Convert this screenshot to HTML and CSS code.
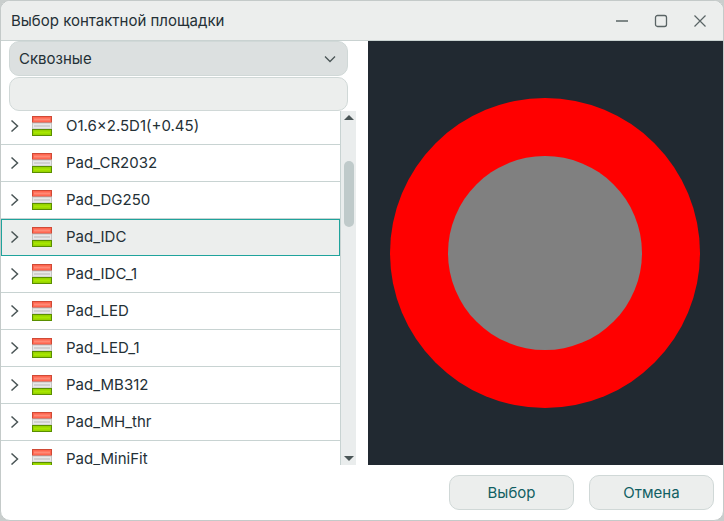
FILE: index.html
```html
<!DOCTYPE html>
<html lang="ru">
<head>
<meta charset="utf-8">
<title>Выбор контактной площадки</title>
<link rel="stylesheet" href="styles.css">
</head>
<body>
<svg class="defs" width="0" height="0">
  <defs>
    <symbol id="pad" viewBox="0 0 20 20">
      <rect x="0.5" y="0.5" width="19" height="6" fill="#ff6650" stroke="#d04a36"/>
      <rect x="2" y="2.500" width="16" height="2" fill="#ff8a76"/>
      <rect x="0.5" y="7" width="19" height="6" fill="#e8e8e8" stroke="#c4c4c4"/>
      <rect x="2" y="9" width="16" height="2" fill="#d0d0d0"/>
      <rect x="0.5" y="13.5" width="19" height="6" fill="#98d400" stroke="#5a8f00"/>
      <rect x="2" y="15.500" width="16" height="2" fill="#a8e800"/>
    </symbol>
    <symbol id="chev" viewBox="0 0 9 14">
      <path d="M1.5 1.5 7.5 7 1.5 12.5" fill="none" stroke="#4a5556" stroke-width="1.5"/>
    </symbol>
  </defs>
</svg>
<div class="window">
  <header class="titlebar">
    <span class="title">Выбор контактной площадки</span>
    <div class="controls">
      <svg class="ctl" viewBox="0 0 14 14"><path d="M1 7h12" stroke="#5a6465" stroke-width="1.3" fill="none"/></svg>
      <svg class="ctl" viewBox="0 0 14 14"><rect x="1.5" y="1.5" width="11" height="11" rx="2" stroke="#5a6465" stroke-width="1.3" fill="none"/></svg>
      <svg class="ctl" viewBox="0 0 14 14"><path d="M1.5 1.5 12.5 12.5M12.5 1.5 1.5 12.5" stroke="#5a6465" stroke-width="1.2" fill="none"/></svg>
    </div>
  </header>
  <main class="body">
    <section class="left">
      <div class="filters">
        <div class="combo">
          <span>Сквозные</span>
          <svg class="combo-arrow" viewBox="0 0 12 8"><path d="M1 1.5 6 6.5 11 1.5" fill="none" stroke="#4a5556" stroke-width="1.3"/></svg>
        </div>
        <div class="search"></div>
      </div>
      <div class="listwrap">
        <ul class="list">
          <li class="row"><svg class="chev"><use href="#chev"/></svg><svg class="pad"><use href="#pad"/></svg><span>O1.6×2.5D1(+0.45)</span></li>
          <li class="row"><svg class="chev"><use href="#chev"/></svg><svg class="pad"><use href="#pad"/></svg><span>Pad_CR2032</span></li>
          <li class="row"><svg class="chev"><use href="#chev"/></svg><svg class="pad"><use href="#pad"/></svg><span>Pad_DG250</span></li>
          <li class="row selected"><svg class="chev"><use href="#chev"/></svg><svg class="pad"><use href="#pad"/></svg><span>Pad_IDC</span></li>
          <li class="row"><svg class="chev"><use href="#chev"/></svg><svg class="pad"><use href="#pad"/></svg><span>Pad_IDC_1</span></li>
          <li class="row"><svg class="chev"><use href="#chev"/></svg><svg class="pad"><use href="#pad"/></svg><span>Pad_LED</span></li>
          <li class="row"><svg class="chev"><use href="#chev"/></svg><svg class="pad"><use href="#pad"/></svg><span>Pad_LED_1</span></li>
          <li class="row"><svg class="chev"><use href="#chev"/></svg><svg class="pad"><use href="#pad"/></svg><span>Pad_MB312</span></li>
          <li class="row"><svg class="chev"><use href="#chev"/></svg><svg class="pad"><use href="#pad"/></svg><span>Pad_MH_thr</span></li>
          <li class="row"><svg class="chev"><use href="#chev"/></svg><svg class="pad"><use href="#pad"/></svg><span>Pad_MiniFit</span></li>
        </ul>
        <div class="scrollbar">
          <div class="arrow up"></div>
          <div class="thumb"></div>
          <div class="arrow down"></div>
        </div>
      </div>
    </section>
    <section class="preview">
      <svg class="pad-view" viewBox="0 0 355 424">
        <circle cx="177" cy="212" r="155" fill="#ff0000"/>
        <circle cx="177" cy="212" r="97" fill="#808080"/>
      </svg>
    </section>
  </main>
  <footer class="footer">
    <button class="btn">Выбор</button>
    <button class="btn">Отмена</button>
  </footer>
</div>
</body>
</html>
```

FILE: styles.css
```css
* { box-sizing: border-box; }
html, body { margin: 0; padding: 0; background: #c9cecd; }
body { width: 724px; height: 521px; overflow: hidden; font-family: Inter, "Noto Sans", sans-serif; }
.defs { display: block; height: 0; width: 0; }
.window {
  width: 724px; height: 521px; background: #fff;
  border: 1px solid #c4cac9; border-radius: 10px; overflow: hidden;
  display: flex; flex-direction: column;
}
.titlebar {
  height: 40px; flex: none; background: #eceeed;
  border-bottom: 1px solid #c9d2d1;
  display: flex; align-items: center; justify-content: space-between;
  padding: 0 16px 0 10px;
}
.title { font-size: 15px; color: #243036; }
.controls { display: flex; gap: 25px; align-items: center; }
.ctl { width: 14px; height: 14px; display: block; }
.body { height: 424px; flex: none; display: flex; }
.left { width: 355px; flex: none; display: flex; flex-direction: column; }
.filters { padding: 0 8px; width: 355px; display: flex; flex-direction: column; gap: 1px; }
.combo {
  height: 35px; background: #dce0e0; border: 1px solid #d0d8d7; border-radius: 10px;
  display: flex; align-items: center; justify-content: space-between;
  padding: 0 11px 0 9px; font-size: 15px; color: #243036;
}
.combo-arrow { width: 12px; height: 8px; display: block; }
.search { height: 34px; background: #eceeed; border: 1px solid #d0d8d7; border-radius: 10px; }
.listwrap { flex: 1; min-height: 0; display: flex; overflow: hidden; }
.list { list-style: none; margin: -3px 0 0; padding: 0; width: 339px; flex: none; overflow: hidden; }
.row {
  height: 37px; display: flex; align-items: center;
  border-bottom: 1px solid #c8d3d2; font-size: 15px; color: #243036;
  padding: 0 0 2px 9px;
}
.row.selected { background: #eceeed; border: 1px solid #1fa39c; padding: 0 0 3px 8px; }
.chev { width: 9px; height: 14px; flex: none; margin: 2px 13px 0 0; }
.pad { width: 20px; height: 20px; flex: none; margin: 2px 14px 0 0; }
.scrollbar {
  width: 16px; flex: none; background: #eaeded; border-left: 1px solid #c8d3d2;
  display: flex; flex-direction: column; align-items: center; position: relative;
}
.arrow { width: 0; height: 0; border-left: 5px solid transparent; border-right: 5px solid transparent; flex: none; }
.arrow.up { border-bottom: 5px solid #4a5556; margin-top: 4px; }
.arrow.down { border-top: 5px solid #4a5556; margin-top: auto; margin-bottom: 4px; }
.thumb { width: 10px; height: 66px; background: #bfcaca; border-radius: 5px; margin-top: 41px; }
.preview { width: 355px; margin-left: 12px; flex: none; background: #212931; }
.pad-view { display: block; width: 355px; height: 424px; }
.footer { flex: 1; display: flex; justify-content: flex-end; align-items: flex-start; gap: 15px; padding: 10px 9px 0 0; }
.btn {
  width: 125px; height: 35px; background: #eceeed; border: 1px solid #d0d8d7; border-radius: 10px;
  font-family: inherit; font-size: 15px; color: #115f63; padding: 0;
}
```
